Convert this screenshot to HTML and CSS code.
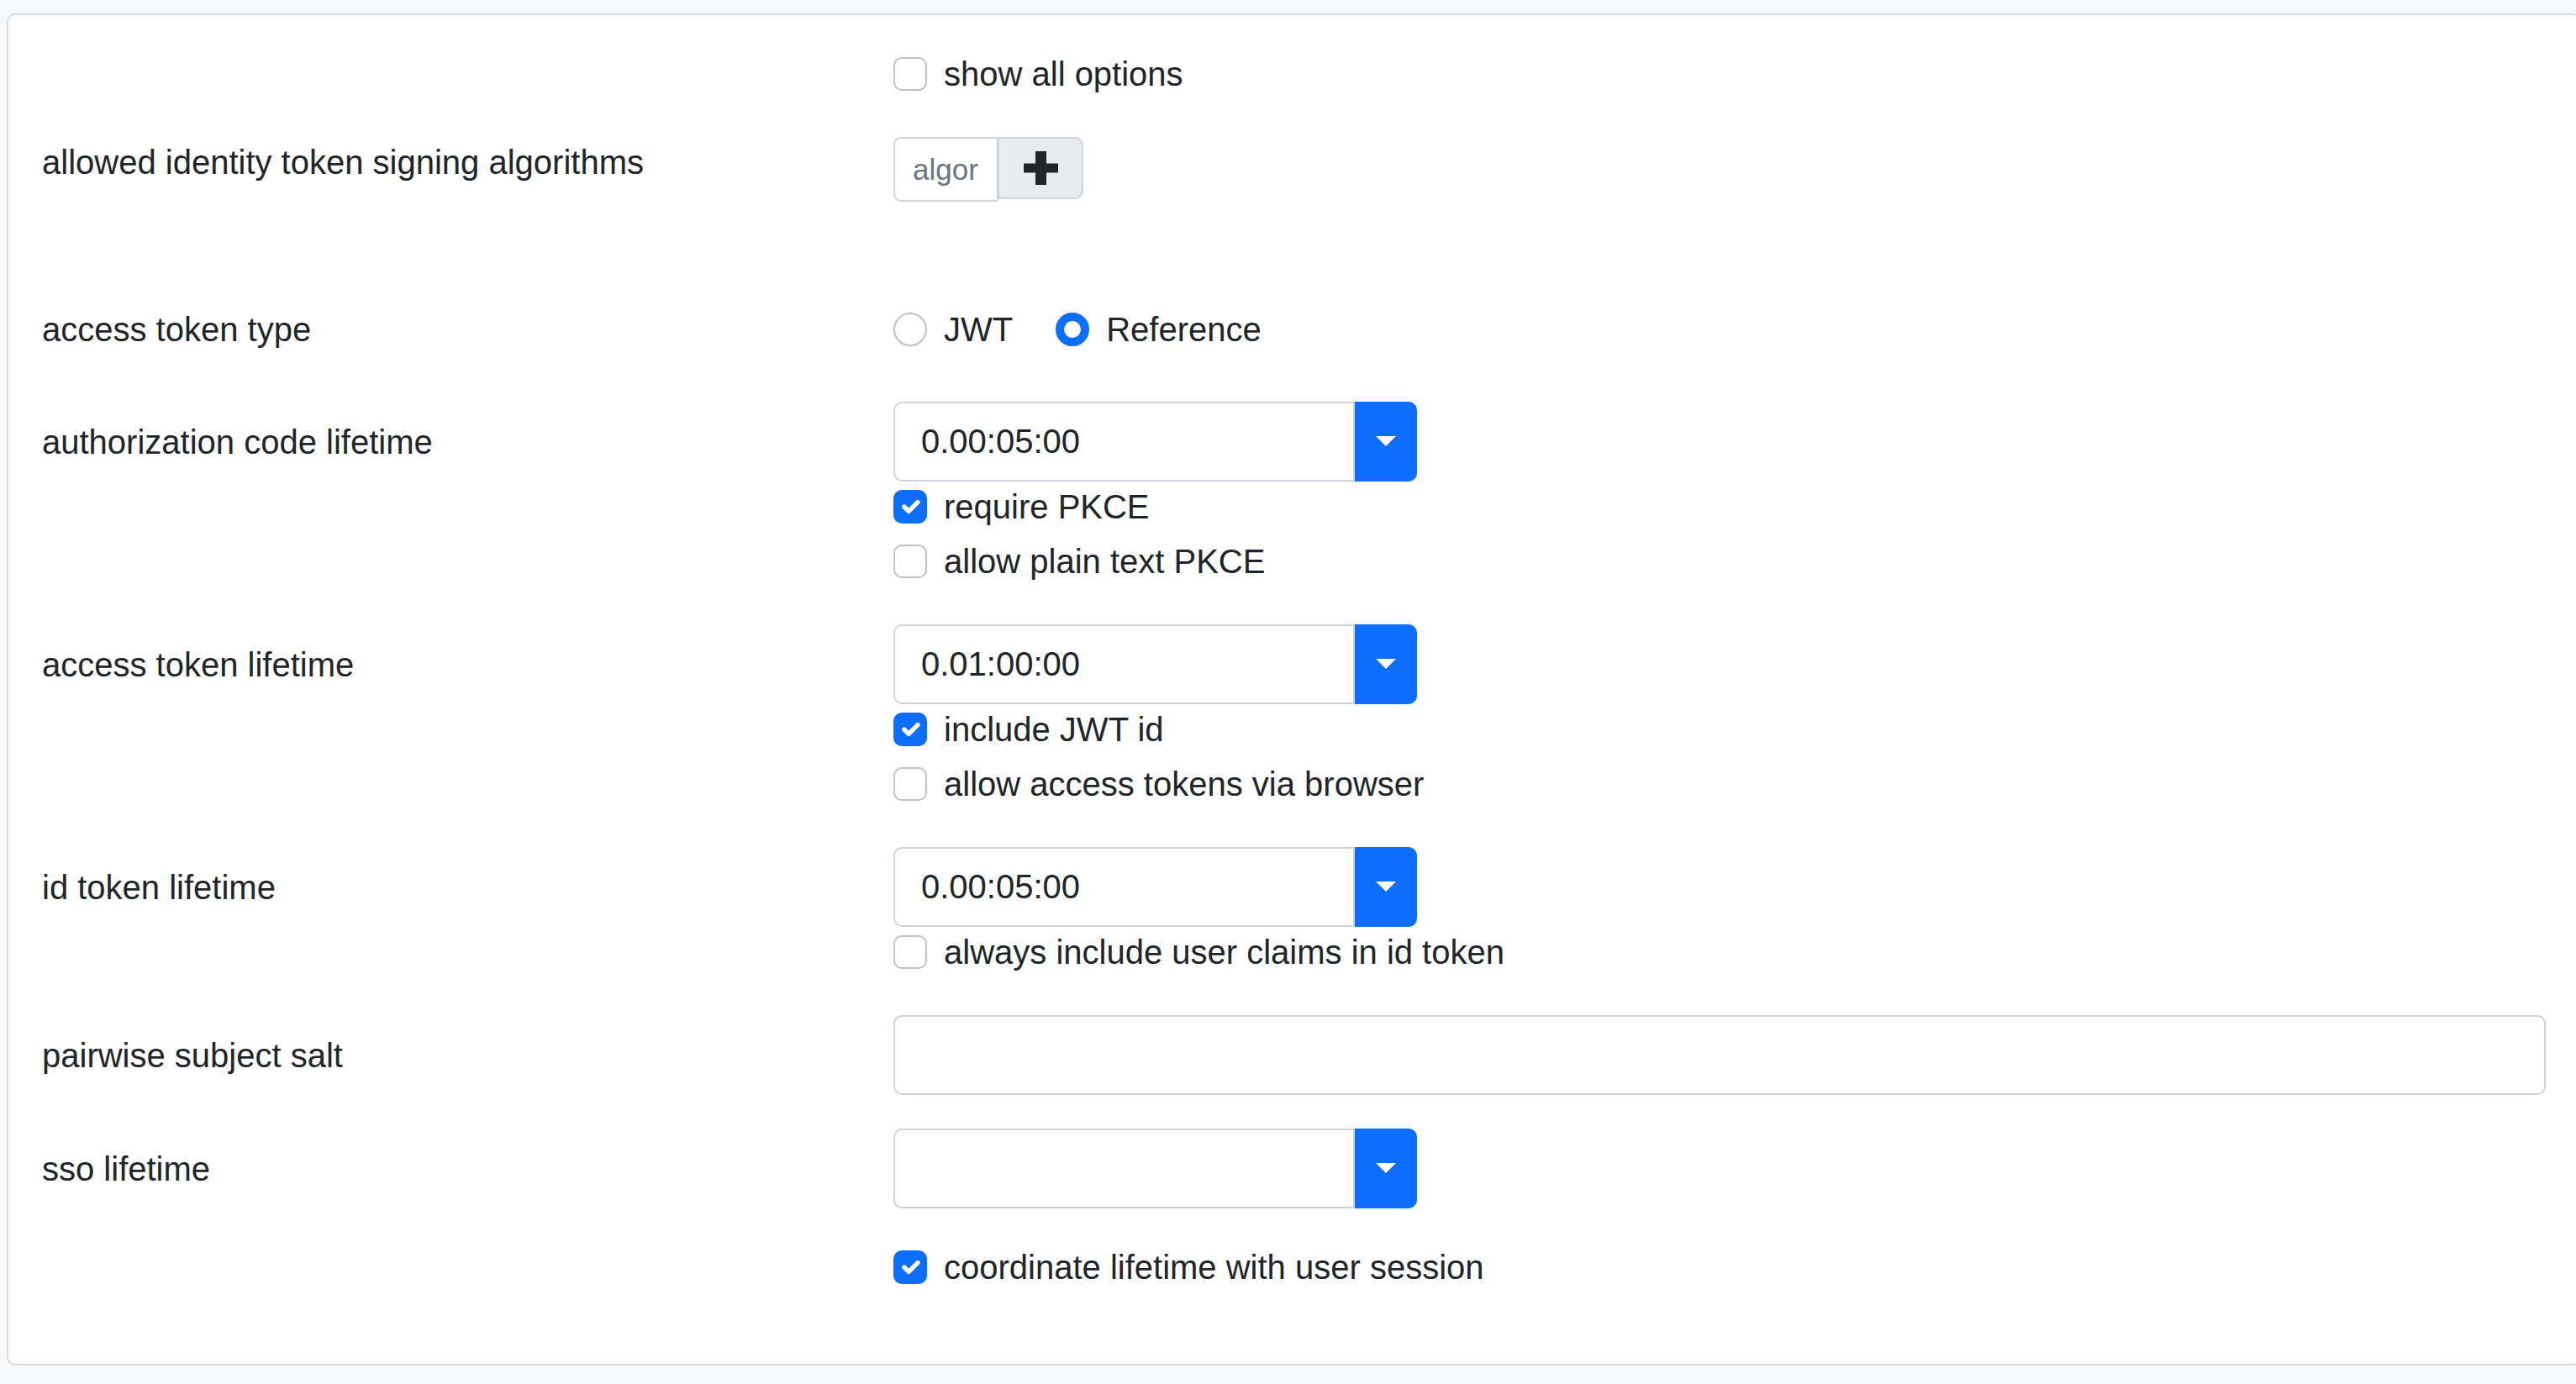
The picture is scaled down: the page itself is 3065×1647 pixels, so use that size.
FILE: index.html
```html
<!DOCTYPE html>
<html lang="en">
<head>
<meta charset="utf-8">
<title>Token settings</title>
<link rel="stylesheet" href="styles.css">
</head>
<body>
<div class="card">

  <div class="row">
    <div class="lbl"></div>
    <div class="ctl">
      <div class="check"><span class="box"></span><span class="txt">show all options</span></div>
    </div>
  </div>

  <div class="row">
    <div class="lbl">allowed identity token signing algorithms</div>
    <div class="ctl">
      <div class="igroup">
        <input class="alg-input" type="text" placeholder="algor">
        <button class="add-btn" type="button" aria-label="add">
          <svg width="41" height="40" viewBox="0 0 41 40"><rect x="0" y="14.5" width="41" height="11" fill="#212529"/><rect x="14" y="0" width="13" height="40" fill="#212529"/></svg>
        </button>
      </div>
      <div class="tag-list"></div>
    </div>
  </div>

  <div class="row row-radios">
    <div class="lbl">access token type</div>
    <div class="ctl radios">
      <div class="radio-item"><span class="box round"></span><span class="txt">JWT</span></div>
      <div class="radio-item"><span class="box round on"></span><span class="txt">Reference</span></div>
    </div>
  </div>

  <div class="row">
    <div class="lbl field">authorization code lifetime</div>
    <div class="ctl">
      <div class="sgroup">
        <input class="fc" type="text" value="0.00:05:00">
        <button class="drop" type="button" aria-label="choose"><span class="caret"></span></button>
      </div>
      <div class="check"><span class="box on"><svg width="36" height="36" viewBox="0 0 20 20"><path d="m6 10 3 3 6-6" fill="none" stroke="#fff" stroke-width="3" stroke-linecap="round" stroke-linejoin="round"/></svg></span><span class="txt">require PKCE</span></div>
      <div class="check"><span class="box"></span><span class="txt">allow plain text PKCE</span></div>
    </div>
  </div>

  <div class="row">
    <div class="lbl field">access token lifetime</div>
    <div class="ctl">
      <div class="sgroup">
        <input class="fc" type="text" value="0.01:00:00">
        <button class="drop" type="button" aria-label="choose"><span class="caret"></span></button>
      </div>
      <div class="check"><span class="box on"><svg width="36" height="36" viewBox="0 0 20 20"><path d="m6 10 3 3 6-6" fill="none" stroke="#fff" stroke-width="3" stroke-linecap="round" stroke-linejoin="round"/></svg></span><span class="txt">include JWT id</span></div>
      <div class="check"><span class="box"></span><span class="txt">allow access tokens via browser</span></div>
    </div>
  </div>

  <div class="row">
    <div class="lbl field">id token lifetime</div>
    <div class="ctl">
      <div class="sgroup">
        <input class="fc" type="text" value="0.00:05:00">
        <button class="drop" type="button" aria-label="choose"><span class="caret"></span></button>
      </div>
      <div class="check"><span class="box"></span><span class="txt">always include user claims in id token</span></div>
    </div>
  </div>

  <div class="row">
    <div class="lbl field">pairwise subject salt</div>
    <div class="ctl">
      <input class="fc full" type="text" value="">
    </div>
  </div>

  <div class="row">
    <div class="lbl field">sso lifetime</div>
    <div class="ctl">
      <div class="sgroup">
        <input class="fc" type="text" value="">
        <button class="drop" type="button" aria-label="choose"><span class="caret"></span></button>
      </div>
    </div>
  </div>

  <div class="row">
    <div class="lbl"></div>
    <div class="ctl">
      <div class="check"><span class="box on"><svg width="36" height="36" viewBox="0 0 20 20"><path d="m6 10 3 3 6-6" fill="none" stroke="#fff" stroke-width="3" stroke-linecap="round" stroke-linejoin="round"/></svg></span><span class="txt">coordinate lifetime with user session</span></div>
    </div>
  </div>

</div>
</body>
</html>
```

FILE: styles.css
```css
html, body {
  margin: 0;
  padding: 0;
  overflow: hidden;
}

body {
  background: #f7f8f9;
  font-family: "Liberation Sans", Arial, sans-serif;
  font-size: 40px;
  line-height: 60px;
  color: #212529;
  height: 1647px;
}

.card {
  box-sizing: border-box;
  margin: 16px 0 0 8px;
  width: 3063px;
  background: #fff;
  border: 2px solid #d9dbdd;
  border-radius: 10px;
  padding: 40px;
}

.row {
  display: grid;
  grid-template-columns: 953px 1fr;
  column-gap: 60px;
  margin-bottom: 40px;
}

.row-radios {
  margin-bottom: 56px;
}

.lbl {
  line-height: 60px;
}

.lbl.field {
  padding: 17.5px 0;
}

.ctl {
  display: flex;
  flex-direction: column;
  align-items: flex-start;
}

/* checkboxes & radios */
.check,
.radio-item {
  display: flex;
  align-items: flex-start;
  gap: 20px;
  height: 60px;
}

.check {
  margin-bottom: 5px;
}

.box {
  box-sizing: border-box;
  width: 40px;
  height: 40px;
  margin-top: 10px;
  border: 2px solid #c2c2c2;
  border-radius: 10px;
  background: #fff;
  display: flex;
  align-items: center;
  justify-content: center;
  flex: none;
}

.box.on {
  background: #0d6efd;
  border-color: #0d6efd;
}

.box.round {
  border-radius: 50%;
}

.box.round.on {
  background: #fff;
  border: 10px solid #0d6efd;
}

.radios {
  flex-direction: row;
}

.radio-item {
  margin-right: 51px;
}

/* algorithm input group */
.igroup {
  display: flex;
  align-items: flex-start;
}

.alg-input {
  box-sizing: border-box;
  width: 124px;
  height: 77px;
  border: 2px solid #ced4da;
  border-right-width: 1px;
  border-radius: 9px 0 0 9px;
  padding: 0 0 0 21px;
  font-family: "Liberation Sans", Arial, sans-serif;
  font-size: 35px;
  color: #212529;
  background: #fff;
  outline: none;
}

.alg-input::placeholder {
  color: #6c757d;
}

.add-btn {
  box-sizing: border-box;
  width: 102px;
  height: 74px;
  border: 2px solid #ced4da;
  border-radius: 0 10px 10px 0;
  background: #e9ecef;
  padding: 0;
  display: flex;
  align-items: center;
  justify-content: center;
}

.tag-list {
  height: 82px;
}

/* select-like input groups */
.sgroup {
  display: flex;
  height: 95px;
}

.fc {
  box-sizing: border-box;
  width: 549px;
  height: 95px;
  border: 2px solid #ced4da;
  border-radius: 10px 0 0 10px;
  padding: 0 30px 0 31px;
  font-family: "Liberation Sans", Arial, sans-serif;
  font-size: 40px;
  color: #212529;
  background: #fff;
  outline: none;
}

.fc.full {
  width: 100%;
  border-radius: 10px;
}

.drop {
  box-sizing: border-box;
  width: 74px;
  height: 95px;
  border: none;
  border-radius: 0 10px 10px 0;
  background: #0d6efd;
  padding: 0;
  display: flex;
  align-items: center;
  justify-content: center;
}

.caret {
  width: 0;
  height: 0;
  border-top: 12px solid #fff;
  border-left: 12px solid transparent;
  border-right: 12px solid transparent;
  margin-top: -2px;
}
```
